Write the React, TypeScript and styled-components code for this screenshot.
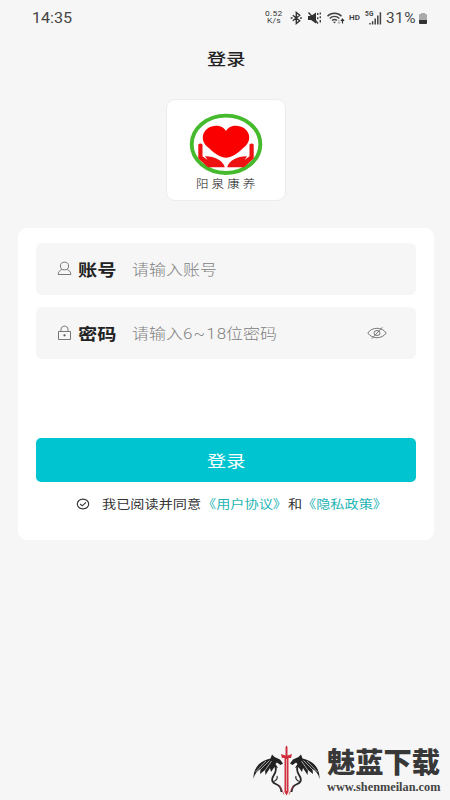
import React from "react";
import styled, { createGlobalStyle } from "styled-components";

const Global = createGlobalStyle`
  * { box-sizing: border-box; }
  body { margin: 0; background: #f6f6f6; font-family: Roboto, "Noto Sans CJK SC", sans-serif; }
`;

const Screen = styled.main`
  width: 450px;
  height: 800px;
  overflow: hidden;
  background: #f6f6f6;
  display: flex;
  flex-direction: column;
`;

/* Wide lettering: the glyphs are stretched horizontally inside a box of the final width. */
const Slot = styled.span<{ $w: number }>`
  display: block;
  flex: none;
  width: ${(p) => p.$w}px;
  white-space: nowrap;
`;
const Glyphs = styled.span<{ $size: number; $sx: number; $color: string; $weight: number; $gap: number; $line: number }>`
  display: block;
  width: max-content;
  transform: scaleX(${(p) => p.$sx});
  transform-origin: left center;
  font-size: ${(p) => p.$size}px;
  line-height: ${(p) => p.$line}px;
  font-weight: ${(p) => p.$weight};
  letter-spacing: ${(p) => p.$gap}px;
  color: ${(p) => p.$color};
`;

type WideProps = { w: number; size: number; sx?: number; color?: string; weight?: number; gap?: number; line?: number; children: React.ReactNode };
const Wide = ({ w, size, sx = 1.18, color = "#333", weight = 400, gap = 0, line = 20, children }: WideProps) => (
  <Slot $w={w}>
    <Glyphs $size={size} $sx={sx} $color={color} $weight={weight} $gap={gap} $line={line}>{children}</Glyphs>
  </Slot>
);

const StatusBar = styled.header`
  height: 36px;
  padding: 0 21px 0 32px;
  display: flex;
  align-items: center;
  justify-content: space-between;
`;
const StatusIcons = styled.div`
  width: 164px;
  height: 36px;
  display: flex;
  align-items: center;
  svg { flex: none; }
`;
const Speed = styled.div`
  flex: none;
  width: 18px;
  margin-right: 7px;
  display: flex;
  flex-direction: column;
  align-items: center;
`;
const StatusGap = styled.span<{ $w: number }>`
  flex: none;
  width: ${(p) => p.$w}px;
`;
const TitleBar = styled.div`
  height: 63px;
  padding-top: 14px;
  padding-left: 1px;
  display: flex;
  justify-content: center;
`;
const LogoCard = styled.div`
  flex: none;
  align-self: center;
  width: 120px;
  margin-left: 2px;
  height: 102px;
  border: 1px solid #ececec;
  border-radius: 9px;
  background: #fff;
  display: flex;
  flex-direction: column;
  align-items: center;
  padding-top: 13px;
  svg { flex: none; }
`;
const LogoName = styled.div`
  display: flex;
  margin-top: -1px;
`;
const Panel = styled.section`
  flex: none;
  margin: 27px 16px 0 18px;
  height: 312px;
  border-radius: 9px;
  background: #fff;
  padding: 15px 18px;
`;
const Field = styled.label`
  height: 52px;
  margin-bottom: 12px;
  border-radius: 6px;
  background: #f6f6f6;
  padding: 3px 29px 0 21px;
  display: flex;
  align-items: center;
`;
const FieldIcon = styled.svg`
  flex: none;
  width: 15px;
  height: 16px;
  margin: -3px 6px 0 0;
`;
const Eye = styled.svg`
  width: 20px;
  height: 14px;
  margin: -4px 0 0 auto;
`;
const Submit = styled.button`
  display: flex;
  width: 100%;
  height: 44.5px;
  margin-top: 78.5px;
  padding: 4px 0 0;
  border: 0;
  border-radius: 5px;
  background: #00c4cf;
  align-items: center;
  justify-content: center;
  font-family: inherit;
  text-align: left;
`;
const Agreement = styled.div`
  display: flex;
  align-items: center;
  margin-top: 13px;
  padding-left: 40px;
`;
const Check = styled.svg`
  flex: none;
  width: 14px;
  height: 12px;
  margin: -2px 12px 0 0;
`;
const Watermark = styled.footer`
  display: flex;
  margin-top: auto;
  padding-left: 250px;
  height: 60px;
`;
const Brand = styled.div`
  margin-left: 5px;
  padding-top: 14px;
`;
const BrandUrl = styled.div`
  margin-top: 3px;
  font-family: "Liberation Serif", serif;
`;

const Bars = () => (
  <svg width="17" height="16" viewBox="0 0 17 16">
    <text x="0" y="6" fontSize="6.5" fontWeight="700" fill="#444" fontFamily="Roboto" textLength="8.5">5G</text>
    <path d="M5 13v1.6M7.6 11.2v3.4M10.2 8.6v6M12.8 5.6v9M15.4 2.2v12.4" stroke="#444" strokeWidth="1.5" />
  </svg>
);

const Dragon = ({ flip = false }: { flip?: boolean }) => (
  <g transform={flip ? "translate(73 0) scale(-1 1)" : undefined}>
    <path d="M3.5 39C3 30 8 21 20.5 18.5L22 14.5L24.5 17L30 19.5L33 23.5L30.5 25L27 22.5L25.5 24L28 28L24.5 27L21 32L20 28L15.5 35L15 30L10 34L10.5 29C7 31 4.5 34 3.5 39Z" fill="#222" />
    <path d="M10 30L19.5 20.5M15 30.5L21.5 21M5.5 32L16 21" stroke="#ddd" strokeWidth=".7" fill="none" />
    <path d="M25 26C29 33 20 36 22.5 41.5C25 45.5 31 43.5 31.5 52" stroke="#292929" strokeWidth="1.8" fill="none" />
    <path d="M22.5 41.5C26 41.5 28 38.5 27 36" stroke="#333" strokeWidth="1.2" fill="none" />
    <path d="M29.5 45L34 54.5" stroke="#b8454d" strokeWidth=".8" fill="none" />
  </g>
);

export default function App() {
  return (
    <Screen>
      <Global />
      <StatusBar>
        <Wide w={42} size={14} sx={1.15} color="#444">14:35</Wide>
        <StatusIcons>
          <Speed>
            <Wide w={18} size={7} sx={1.2} gap={0.2} line={7} color="#333">0.52</Wide>
            <Wide w={14} size={7} sx={1.2} gap={0.2} line={7} color="#333">K/s</Wide>
          </Speed>
          <svg width="13" height="14" viewBox="0 0 13 14">
            <path d="M2.8 4.2l6.9 5.5L6.3 12.5v-11l3.4 2.8-6.9 5.5M.7 7h1.8M10 7h1.8" fill="none" stroke="#333" strokeWidth="1.4" />
          </svg>
          <StatusGap $w={5} />
          <svg width="14" height="14" viewBox="0 0 14 14">
            <path d="M0 5h3l5-3.5v11L3 9H0z" fill="#333" />
            <path d="M.5 1.5l9.5 11" stroke="#333" strokeWidth="1.4" />
            <path d="M9.7 2v2M9.7 6.2v2M12.3 1.5v2M12.3 5.2v2M12.3 9v2.5" stroke="#444" strokeWidth="1.4" />
          </svg>
          <StatusGap $w={4} />
          <svg width="19" height="14" viewBox="0 0 19 14">
            <path d="M1.5 5.2C5 1.3 12 1.3 15.5 5.2M3.7 7.4c2.6-2.7 7-2.7 9.6 0M6 9.5c1.5-1.3 3.5-1.3 5 0" fill="none" stroke="#444" strokeWidth="1.4" />
            <path d="M7 10.7h3L8.5 12.4z" fill="#444" />
            <path d="M13 9v3.5M11.8 11.2l1.2 1.3 1.2-1.3" stroke="#aaa" fill="none" />
            <path d="M16.5 12.5V8.2M14.9 9.8l1.6-1.6 1.6 1.6" stroke="#333" strokeWidth="1.2" fill="none" />
          </svg>
          <StatusGap $w={4} />
          <Wide w={12} size={7.3} sx={1.1} color="#444" weight={700}>HD</Wide>
          <StatusGap $w={4} />
          <Bars />
          <StatusGap $w={3.5} />
          <Wide w={32} size={14} sx={1.1} gap={0.4} color="#444">31%</Wide>
          <svg width="10" height="13" viewBox="0 0 10 13">
            <path d="M1 3q0-1 1-1h1V1h4v1h1q1 0 1 1v6H1z" fill="#aaa" />
            <path d="M1 8h8v3q0 1-1 1H2q-1 0-1-1z" fill="#333" />
          </svg>
        </StatusIcons>
      </StatusBar>
      <TitleBar>
        <Wide w={38} size={16.3} color="#222" weight={500}>登录</Wide>
      </TitleBar>

      <LogoCard>
        <svg width="74" height="63" viewBox="0 0 74 63">
          <ellipse cx="37" cy="31.3" rx="34.3" ry="28.7" fill="#fff" stroke="#45ba2d" strokeWidth="3.9" />
          <path d="M37 18C33.5 11.5 24 11.5 18.5 15.5C12 20.5 12.5 28.5 18 33.5C24 38.5 28 43.5 37 44.8C46 43.5 50 38.5 56 33.5C61.5 28.5 62 20.5 55.5 15.5C50 11.5 40.5 11.5 37 18Z" fill="#fa0000" />
          <path d="M9.3 31.5q2-1.8 4.2 0v11.7L18.5 47L16 43.3C25 43 34 47.5 35.8 54.2H19L9.3 45.5z" fill="#ee1111" />
          <path d="M64.7 31.5q-2-1.8-4.2 0v11.7L55.5 47L58 43.3C49 43 40 47.5 38.2 54.2H55L64.7 45.5z" fill="#ee1111" />
        </svg>
        <LogoName><Wide w={60} size={11} sx={1.14} gap={2.7} weight={300} color="#111">阳泉康养</Wide></LogoName>
      </LogoCard>

      <Panel>
        <Field>
          <FieldIcon viewBox="0 0 15 16" fill="none" stroke="#777" strokeWidth="1">
            <ellipse cx="7.5" cy="5" rx="4.1" ry="3.8" />
            <path d="M4.9 8.6C2.5 9.5 1.2 11 1.2 13.5H13.8C13.8 11 12.5 9.5 10.1 8.6" />
          </FieldIcon>
          <Wide w={54} size={16.3} weight={700} color="#222">账号</Wide>
          <Wide w={90} size={14.4} color="#808080" weight={300}>请输入账号</Wide>
        </Field>
        <Field>
          <FieldIcon viewBox="0 0 15 16" fill="none" stroke="#777" strokeWidth="1">
            <path d="M1.5 6.5h12v8h-12zM4 6.3V4.5C4 0 11 0 11 4.5v1.8" />
            <circle cx="7.5" cy="10.3" r="1.1" fill="#555" stroke="none" />
          </FieldIcon>
          <Wide w={54} size={16.3} weight={700} color="#222">密码</Wide>
          <Wide w={51} size={14.4} color="#808080" weight={300}>请输入</Wide>
          <Wide w={43} size={14.4} gap={0.9} color="#808080" weight={300}>6~18</Wide>
          <Wide w={52} size={14.4} color="#808080" weight={300}>位密码</Wide>
          <Eye viewBox="0 0 20 14" fill="none" stroke="#777" strokeWidth="1">
            <path d="M.8 7C5 .7 15 .7 19.2 7C15 13.3 5 13.3 .8 7ZM15.3 1.3L4.8 12.7" />
            <ellipse cx="10" cy="7" rx="3" ry="2.5" />
          </Eye>
        </Field>
        <Submit><Wide w={39} size={16.3} color="#fff">登录</Wide></Submit>
        <Agreement>
          <Check viewBox="0 0 14 12" fill="none" stroke="#333" strokeWidth="1.1">
            <ellipse cx="7" cy="6" rx="5.7" ry="4.9" />
            <path d="M4.2 6l2 1.8L10 4.3" />
          </Check>
          <Wide w={100} size={12}>我已阅读并同意</Wide>
          <Wide w={86} size={12} color="#1fb5b5">《用户协议》</Wide>
          <Wide w={14} size={12}>和</Wide>
          <Wide w={86} size={12} color="#1fb5b5">《隐私政策》</Wide>
        </Agreement>
      </Panel>

      <Watermark>
        <svg width="72" height="60" viewBox="0 0 72 60">
          <Dragon />
          <Dragon flip />
          <path d="M35.5 7l1-1.5 1 1.5v8.5l4.5-1.5-1 4h-2.5v34l-2 3.5-2-3.5V18H32l-1-4 4.5 1.5z" fill="#d02d3e" />
          <path d="M36.5 19v32" stroke="#efb3b8" strokeWidth=".9" />
        </svg>
        <Brand>
          <Wide w={114} size={28} sx={1.01} weight={900} color="#383838">魅蓝下载</Wide>
          <BrandUrl><Wide w={114} size={12} sx={1.025} weight={700} color="#444">www.shenmeilan.com</Wide></BrandUrl>
        </Brand>
      </Watermark>
    </Screen>
  );
}
